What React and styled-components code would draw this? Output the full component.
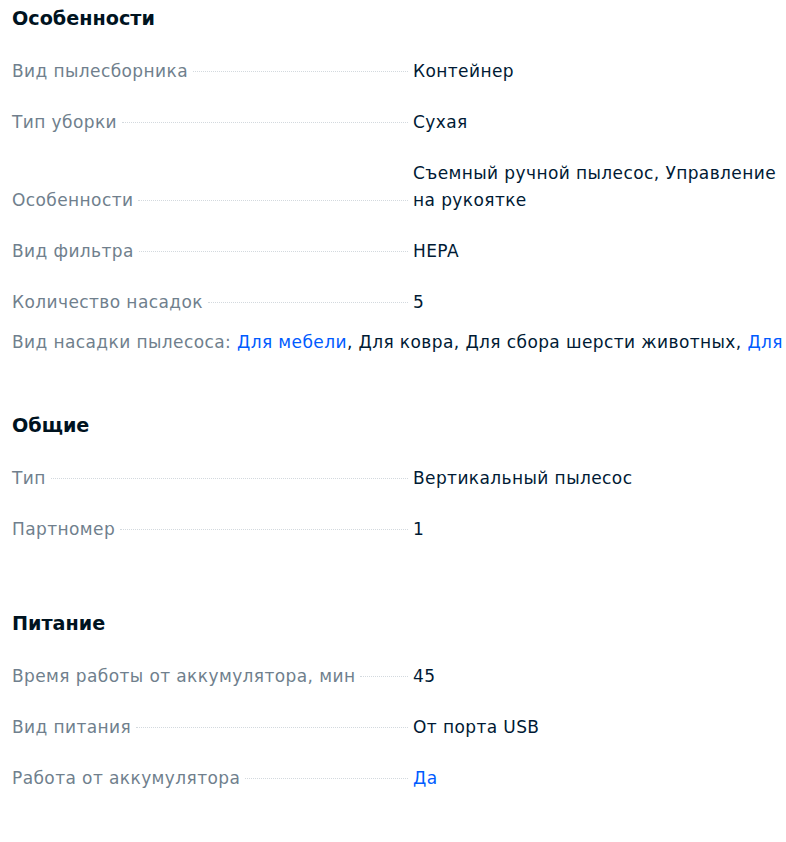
import React from 'react';
import styled, { createGlobalStyle } from 'styled-components';

const GlobalStyle = createGlobalStyle`
  html, body {
    margin: 0;
    padding: 0;
    background: #fff;
  }
  body {
    font-family: 'DejaVu Sans', 'Noto Sans', sans-serif;
    -webkit-font-smoothing: antialiased;
  }
`;

const sections = [
  {
    title: 'Особенности',
    rows: [
      { name: 'Вид пылесборника', value: 'Контейнер' },
      { name: 'Тип уборки', value: 'Сухая' },
      { name: 'Особенности', value: 'Съемный ручной пылесос, Управление на рукоятке' },
      { name: 'Вид фильтра', value: 'HEPA' },
      { name: 'Количество насадок', value: '5' },
    ],
    inline: {
      name: 'Вид насадки пылесоса',
      items: [
        { text: 'Для мебели', link: true },
        { text: 'Для ковра' },
        { text: 'Для сбора шерсти животных' },
        { text: 'Для щелей', link: true },
      ],
    },
  },
  {
    title: 'Общие',
    rows: [
      { name: 'Тип', value: 'Вертикальный пылесос' },
      { name: 'Партномер', value: '1' },
    ],
  },
  {
    title: 'Питание',
    rows: [
      { name: 'Время работы от аккумулятора, мин', value: '45' },
      { name: 'Вид питания', value: 'От порта USB' },
      { name: 'Работа от аккумулятора', value: 'Да', link: true },
    ],
  },
];

function App() {
  return (
    <Page>
      <GlobalStyle />
      {sections.map((section) => (
        <Section key={section.title}>
          <Title>{section.title}</Title>
          {section.rows.map((row) => (
            <Row key={row.name}>
              <Label>
                <span>{row.name}</span>
              </Label>
              <Value $link={row.link}>{row.value}</Value>
            </Row>
          ))}
          {section.inline && (
            <InlineRow>
              <span className="name">{section.inline.name}: </span>
              {section.inline.items.map((item, i) => (
                <React.Fragment key={item.text}>
                  <Value as="span" $link={item.link}>
                    {item.text}
                  </Value>
                  {i < section.inline.items.length - 1 && ', '}
                </React.Fragment>
              ))}
            </InlineRow>
          )}
        </Section>
      ))}
    </Page>
  );
}

export default App;

const Page = styled.div`
  padding: 5px 0 40px 12px;
  width: 786px;
  height: 842px;
  box-sizing: border-box;
  overflow: hidden;
`;

const Section = styled.section`
  display: flex;
  flex-direction: column;
  margin-bottom: 43px;
`;

const Title = styled.h2`
  margin: 0 0 25px;
  font-size: 19.2px;
  line-height: 28px;
  font-weight: 700;
  color: #00131f;
`;

const Row = styled.div`
  display: grid;
  grid-template-columns: 401px 1fr;
  align-items: end;
  margin-bottom: 24px;
`;

const Label = styled.div`
  display: flex;
  align-items: baseline;
  font-size: 17px;
  line-height: 27px;
  letter-spacing: 0.4px;
  color: #707f8d;

  span {
    flex: none;
  }

  &::after {
    content: '';
    flex: 1;
    min-width: 12px;
    margin: 0 5px;
    border-bottom: 1px dotted #d3d9de;
    transform: translateY(-5px);
  }
`;

const Value = styled.div`
  font-size: 17px;
  line-height: 27px;
  letter-spacing: 0.4px;
  color: ${(p) => (p.$link ? '#005bff' : '#001a34')};
`;

const InlineRow = styled.div`
  margin: -11px 0 13px;
  font-size: 17px;
  line-height: 27px;
  letter-spacing: 0.4px;
  color: #001a34;
  white-space: nowrap;
  overflow: hidden;

  .name {
    color: #707f8d;
  }
`;
